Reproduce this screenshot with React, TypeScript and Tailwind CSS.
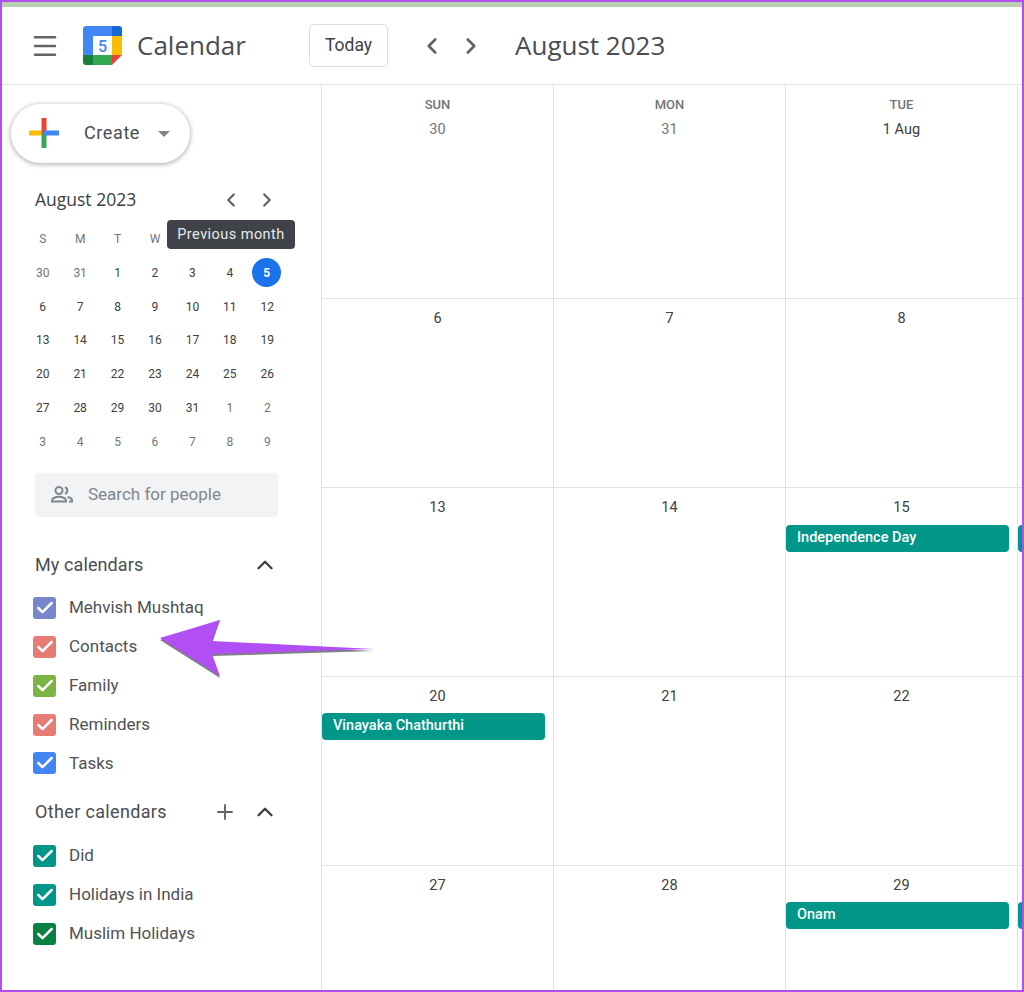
import React from 'react';
import { ChevronLeft, ChevronRight, ChevronUp, Plus, Menu, Check } from 'lucide-react';

const miniDays = [
  [30, 31, 1, 2, 3, 4, 5],
  [6, 7, 8, 9, 10, 11, 12],
  [13, 14, 15, 16, 17, 18, 19],
  [20, 21, 22, 23, 24, 25, 26],
  [27, 28, 29, 30, 31, 1, 2],
  [3, 4, 5, 6, 7, 8, 9],
];

const weeks = [
  { height: 'h-[214px]', days: ['30', '31', '1 Aug', ''] },
  { height: 'h-[189px]', days: ['6', '7', '8', ''] },
  { height: 'h-[189px]', days: ['13', '14', '15', ''], event: { col: 2, label: 'Independence Day', gap: 'mt-[7px]' } },
  { height: 'h-[189px]', days: ['20', '21', '22', ''], event: { col: 0, label: 'Vinayaka Chathurthi', gap: 'mt-[6px]' } },
  { height: 'h-[189px]', days: ['27', '28', '29', ''], event: { col: 2, label: 'Onam', gap: 'mt-[6px]' } },
];

const CalendarRow = ({ label, color }: { label: string; color: string }) => (
  <div className="flex items-center h-[38.8px] pl-[31px]">
    <span className={`w-[23px] h-[22px] rounded-[3px] flex items-center justify-center ${color}`}>
      <Check size={20} strokeWidth={3} className="text-white" />
    </span>
    <span className="ml-[13px] text-[17px] text-[#4f5256]">{label}</span>
  </div>
);

const Logo = () => (
  <svg width="39" height="39" viewBox="0 0 39 39" className="shrink-0">
    <path d="M3 0H29V10H10V29H0V3A3 3 0 0 1 3 0Z" fill="#4285f4" />
    <path d="M29 0H36A3 3 0 0 1 39 3V10H29Z" fill="#1967d2" />
    <rect x="29" y="10" width="10" height="19" fill="#fbbc04" />
    <rect x="10" y="29" width="19" height="10" fill="#34a853" />
    <path d="M0 29H10V39H3A3 3 0 0 1 0 36Z" fill="#188038" />
    <path d="M29 29H39L29 39Z" fill="#ea4335" />
    <text x="19.5" y="26" textAnchor="middle" fontSize="16" fontWeight="500" fill="#4285f4" fontFamily="Roboto, sans-serif">5</text>
  </svg>
);

const App: React.FC = () => {
  return (
    <div className="relative w-[1024px] h-[992px] overflow-hidden bg-white border-2 border-[#b14ff5] font-['Roboto',sans-serif]">
      <div className="h-[5px] bg-[#b9cfb0]" />

      <header className="h-[78px] flex items-center border-b border-[#e3e5e8] text-[#3c4043]">
        <Menu size={30} strokeWidth={2} className="ml-[28px] text-[#5f6368]" />
        <div className="ml-[23px]">
          <Logo />
        </div>
        <span className="ml-[15px] w-[172px] text-[26px] text-[#4a4d51] font-['Open_Sans',sans-serif]">Calendar</span>
        <button className="w-[79px] h-[43px] border border-[#dadce0] rounded-[5px] text-[17.5px] text-[#3c4043]">Today</button>
        <ChevronLeft size={26} strokeWidth={2.4} className="ml-[31px] text-[#5f6368]" />
        <ChevronRight size={26} strokeWidth={2.4} className="ml-[13px] text-[#5f6368]" />
        <span className="ml-[31px] text-[26px] text-[#4a4d51] font-['Open_Sans',sans-serif]">August 2023</span>
      </header>

      <div className="flex">
        <aside className="w-[320px] h-[905px] shrink-0 border-r border-[#e0e2e5]">
          <button className="mt-[19px] ml-[9px] w-[179px] h-[59px] rounded-full bg-white shadow-[0_1px_4px_1px_rgba(60,64,67,0.35)] flex items-center">
            <svg width="30" height="30" viewBox="0 0 30 30" className="ml-[18px] -mt-[1px]">
              <rect x="0" y="12.5" width="15" height="5" fill="#fbbc04" />
              <rect x="12.5" y="0" width="5" height="15" fill="#ea4335" />
              <rect x="12.5" y="15" width="5" height="15" fill="#34a853" />
              <rect x="15" y="12.5" width="15" height="5" fill="#4285f4" />
            </svg>
            <span className="ml-[25px] -mt-[2px] text-[18px] tracking-[0.6px] font-normal text-[#4a4d51]">Create</span>
            <svg width="12" height="6" viewBox="0 0 12 6" className="ml-[18px]">
              <path d="M0 0H12L6 6Z" fill="#80868b" />
            </svg>
          </button>

          <div className="mt-[24px] pl-[33px] pr-[43px] h-[26px] flex items-center justify-between">
            <span className="-mt-[1px] text-[17.5px] text-[#3c4043] font-['Open_Sans',sans-serif]">August 2023</span>
            <div className="flex gap-[14px] text-[#5f6368]">
              <ChevronLeft size={22} strokeWidth={2.4} />
              <ChevronRight size={22} strokeWidth={2.4} />
            </div>
          </div>

          <div className="mt-[9px] ml-[22px] w-[262px]">
            <div className="grid grid-cols-7 h-[34px] items-center text-center text-[12px] text-[#70757a]">
              {['S', 'M', 'T', 'W'].map((d, i) => (
                <span key={i}>{d}</span>
              ))}
            </div>
            {miniDays.map((row, r) => (
              <div key={r} className="grid grid-cols-7 h-[33.8px] items-center justify-items-center text-[12px] text-[#3c4043]">
                {row.map((d, i) => {
                  const muted = (r === 0 && i < 2) || (r >= 4 && (r === 5 || i > 4));
                  if (r === 0 && d === 5) {
                    return (
                      <span key={i} className="w-[29px] h-[29px] -ml-[1px] rounded-full bg-[#1a73e8] text-white font-bold flex items-center justify-center">
                        {d}
                      </span>
                    );
                  }
                  return (
                    <span key={i} className={muted ? 'text-[#70757a]' : ''}>
                      {d}
                    </span>
                  );
                })}
              </div>
            ))}
          </div>

          <div className="mt-[14px] ml-[33px] w-[243px] h-[44px] bg-[#f1f3f4] rounded-[4px] flex items-center pl-[15px]">
            <svg width="24" height="24" viewBox="0 0 24 24" fill="none" stroke="#80868b" strokeWidth="2">
              <circle cx="9" cy="7.5" r="3.5" />
              <path d="M2 18.5v-1.2c0-2 4-3.6 7-3.6s7 1.6 7 3.6v1.2Z" />
              <path d="M15 4.2a3.5 3.5 0 0 1 0 6.6M17.5 13.9c2.5.5 4.5 1.7 4.5 3.4v1.2h-3" />
            </svg>
            <span className="ml-[14px] text-[17px] text-[#80868b]">Search for people</span>
          </div>

          <div className="mt-[30px] pl-[33px] pr-[43px] h-[36px] flex items-center justify-between text-[#3c4043]">
            <span className="text-[18px] font-normal tracking-[0.1px] text-[#4a4d51]">My calendars</span>
            <ChevronUp size={26} strokeWidth={2.2} />
          </div>
          <div className="mt-[6px]">
            <CalendarRow label="Mehvish Mushtaq" color="bg-[#7986cb]" />
            <CalendarRow label="Contacts" color="bg-[#e67c73]" />
            <CalendarRow label="Family" color="bg-[#7cb342]" />
            <CalendarRow label="Reminders" color="bg-[#e67c73]" />
            <CalendarRow label="Tasks" color="bg-[#4285f4]" />
          </div>

          <div className="mt-[11px] pl-[33px] pr-[43px] h-[36px] flex items-center text-[#3c4043]">
            <span className="text-[18px] font-normal tracking-[0.35px] text-[#4a4d51]">Other calendars</span>
            <Plus size={24} strokeWidth={1.9} className="ml-auto text-[#5f6368]" />
            <ChevronUp size={26} strokeWidth={2.2} className="ml-[15px]" />
          </div>
          <div className="mt-[7px]">
            <CalendarRow label="Did" color="bg-[#009688]" />
            <CalendarRow label="Holidays in India" color="bg-[#009688]" />
            <CalendarRow label="Muslim Holidays" color="bg-[#0b8043]" />
          </div>
        </aside>

        <main className="flex-1 min-w-0">
          {weeks.map((week, w) => (
            <div key={w} className={`grid grid-cols-[232px_232px_232px_1fr] ${week.height}`}>
              {week.days.map((day, c) => (
                <div key={c} className={`border-b border-[#e0e2e5] ${c < 3 ? 'border-r' : ''} ${w === 4 ? 'border-b-0' : ''}`}>
                  {w === 0 && c < 3 && (
                    <div className="pt-[13px] h-[35px] text-center text-[13px] font-medium leading-[14px] text-[#70757a]">
                      {['SUN', 'MON', 'TUE'][c]}
                    </div>
                  )}
                  <div className={`h-[20px] text-center text-[14.5px] leading-[20px] ${w === 0 ? (c === 2 ? 'text-[#3c4043]' : 'text-[#70757a]') : 'mt-[10px] text-[#3c4043]'}`}>
                    {day}
                  </div>
                  {week.event && week.event.col === c && (
                    <div className={`${week.event.gap} w-[223px] h-[27px] rounded-[4px] bg-[#009688] text-white text-[14.5px] font-medium leading-[25px] pl-[11px]`}>
                      {week.event.label}
                    </div>
                  )}
                  {week.event && week.event.col === 2 && c === 3 && (
                    <div className={`${week.event.gap} h-[27px] rounded-l-[4px] bg-[#009688]`} />
                  )}
                </div>
              ))}
            </div>
          ))}
        </main>
      </div>

      {/* tooltip over the mini calendar */}
      <div className="absolute left-[165px] top-[218px] w-[128px] h-[29px] rounded-[4px] bg-[#3f4347] text-[#e8eaed] text-[14.5px] tracking-[0.45px] flex items-center justify-center">
        Previous month
      </div>

      {/* annotation arrow */}
      <svg className="absolute left-[148px] top-[608px]" width="230" height="76" viewBox="0 0 230 76">
        <path d="M10 30L70 68L62 46L224 41L62 34L70 10Z" fill="#7f7f86" />
        <path d="M10 28L70 66L62 44L224 39L62 31L70 10Z" fill="#b14ff5" />
      </svg>
    </div>
  );
};

export default App;
